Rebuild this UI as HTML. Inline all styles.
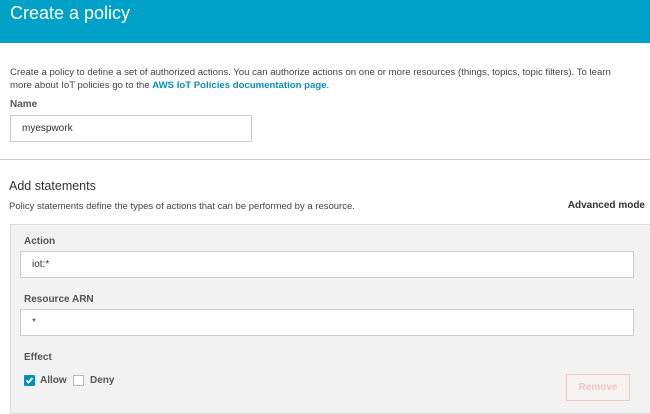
<!DOCTYPE html>
<html><head><style>
*{margin:0;padding:0;box-sizing:border-box}
body{width:650px;height:409px;overflow:hidden;background:#fff;font-family:"Liberation Sans",sans-serif;color:#444;position:relative}
.a{position:absolute;white-space:nowrap}
.hdr{left:0;top:0;width:650px;height:43px;background:#00a1c9}
.inp{position:absolute;background:#fff;border:1px solid #ccc;font-size:10px;color:#333;padding-left:11px;display:flex;align-items:center}
.lbl{font-size:10px;font-weight:bold;color:#555}
</style></head><body>
<div class="a hdr"></div>
<div class="a" style="left:10px;top:3px;font-size:18px;color:#fff">Create a policy</div>
<div class="a" style="left:10px;top:66px;font-size:9.6px;line-height:13px;color:#444">Create a policy to define a set of authorized actions. You can authorize actions on one or more resources (things, topics, topic filters). To learn<br>more about IoT policies go to the <span style="color:#0a8fb8;font-weight:bold">AWS IoT Policies documentation page</span>.</div>
<div class="a lbl" style="left:10px;top:99px">Name</div>
<div class="inp" style="left:10px;top:115px;width:242px;height:27px">myespwork</div>
<div class="a" style="left:0;top:159px;width:650px;height:1px;background:#ccc"></div>
<div class="a" style="left:9px;top:179px;font-size:12.5px;color:#333">Add statements</div>
<div class="a" style="left:9px;top:201px;font-size:9.5px;color:#444">Policy statements define the types of actions that can be performed by a resource.</div>
<div class="a" style="right:5px;top:200px;font-size:10px;font-weight:bold;color:#333">Advanced mode</div>
<div class="a" style="left:10px;top:224px;width:642px;height:190px;background:#f2f2f2;border:1px solid #ddd"></div>
<div class="a lbl" style="left:24px;top:236px">Action</div>
<div class="inp" style="left:20px;top:251px;width:614px;height:27px">iot:*</div>
<div class="a lbl" style="left:24px;top:294px">Resource ARN</div>
<div class="inp" style="left:20px;top:309px;width:614px;height:27px">*</div>
<div class="a lbl" style="left:24px;top:352px">Effect</div>
<svg class="a" style="left:24px;top:375px" width="11" height="11"><rect width="11" height="11" rx="1" fill="#0a8fb8"/><path d="M2.5 5.5l2 2 4-4.5" stroke="#fff" stroke-width="1.8" fill="none"/></svg>
<div class="a lbl" style="left:40px;top:375px">Allow</div>
<div class="a" style="left:73px;top:375px;width:11px;height:11px;background:#fff;border:1px solid #bbb"></div>
<div class="a lbl" style="left:90px;top:375px">Deny</div>
<div class="a" style="left:566px;top:374px;width:64px;height:27px;border:1px solid #f0c8c4;font-size:10px;font-weight:bold;color:#f0c8c4;display:flex;align-items:center;justify-content:center;background:#f7f2f2">Remove</div>
</body></html>
